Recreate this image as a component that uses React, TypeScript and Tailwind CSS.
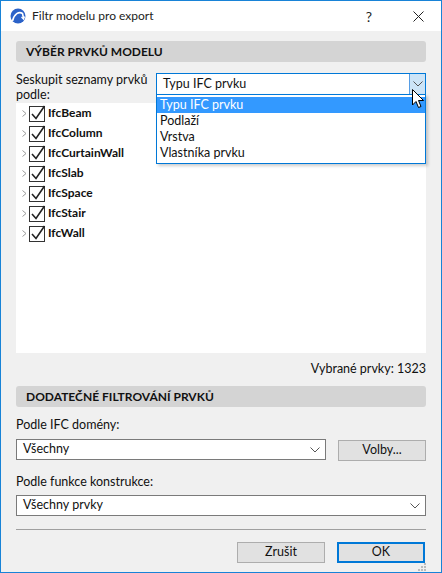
import React from 'react';

const items = ['IfcBeam', 'IfcColumn', 'IfcCurtainWall', 'IfcSlab', 'IfcSpace', 'IfcStair', 'IfcWall'];
const options = ['Typu IFC prvku', 'Podlaží', 'Vrstva', 'Vlastníka prvku'];

const Chevron = ({ color = '#404040' }: { color?: string }) => (
  <svg width="10" height="6" viewBox="0 0 10 6" fill="none">
    <path d="M0.5 0.5 L5 5 L9.5 0.5" stroke={color} strokeWidth="1" />
  </svg>
);

const CheckBox = () => (
  <svg width="17" height="17" viewBox="0 0 17 17" fill="none" className="shrink-0">
    <rect x="0.5" y="1.5" width="15" height="15" fill="white" stroke="#333" />
    <path d="M3 9 L7 13.5 L15.5 1" stroke="#222" strokeWidth="1.6" fill="none" />
  </svg>
);

const SectionHeader = ({ title }: { title: string }) => (
  <div className="h-[21px] shrink-0 bg-[#d4d4d4] rounded-[3px] flex items-center px-[10px] text-[12px] font-bold text-[#111]">
    {title}
  </div>
);

const Select = ({ value, className }: { value: string; className: string }) => (
  <div className={`h-[21px] bg-white border border-[#7a7a7a] flex items-center justify-between pl-[6px] pr-[5px] ${className}`}>
    <span>{value}</span>
    <Chevron color="#555" />
  </div>
);

const Button = ({ label, primary }: { label: string; primary?: boolean }) => (
  <div
    className={`w-[88px] h-[21px] bg-[#e1e1e1] flex items-center justify-center ${
      primary ? 'border-2 border-[#0078d7]' : 'border border-[#adadad]'
    }`}
  >
    {label}
  </div>
);

export default function App() {
  return (
    <div
      className="w-[442px] h-[573px] border border-[#1883d7] flex flex-col text-[12.5px] text-[#111] bg-[#f0f0f0]"
      style={{ fontFamily: 'Lato, "Noto Sans", sans-serif' }}
    >
      {/* title bar */}
      <div className="h-[30px] bg-white flex items-center shrink-0">
        <svg width="16" height="16" viewBox="0 0 16 16" className="ml-[9px]">
          <circle cx="8" cy="8" r="7.5" fill="#2b62c8" />
          <path d="M2.5 13 C4 6, 9 3, 12.5 5.5 L13.5 10" stroke="white" strokeWidth="1.6" fill="none" />
          <path d="M11.5 9 L13.5 11 L14.5 8.5" stroke="white" strokeWidth="1.3" fill="none" />
        </svg>
        <span className="ml-[6px] text-[12px] text-[#222]">Filtr modelu pro export</span>
        <span className="ml-auto mr-[41px] text-[14px] text-[#222]">?</span>
        <svg width="11" height="11" viewBox="0 0 11 11" className="mr-[17px]">
          <path d="M0.5 0.5 L10.5 10.5 M10.5 0.5 L0.5 10.5" stroke="#222" strokeWidth="1" />
        </svg>
      </div>

      {/* body */}
      <div className="flex-1 flex flex-col px-[15px] pt-[10px]">
        <SectionHeader title="VÝBĚR PRVKŮ MODELU" />

        <div className="relative flex h-[41px] pt-[8px]">
          <div className="w-[136px] leading-[15px] pt-[2px]">Seskupit seznamy prvků podle:</div>
          <div className="ml-[4px] mt-[3px] flex-1 h-[22px] bg-white border border-[#0078d7] flex items-center pl-[6px]">
            <span className="flex-1">Typu IFC prvku</span>
            <div className="w-[16px] h-full bg-[#cce4f7] border-l border-[#569de5] flex items-center justify-center">
              <Chevron color="#555" />
            </div>
          </div>

          {/* open dropdown list */}
          <div className="absolute left-[140px] right-0 top-[32px] bg-white border border-[#0078d7] z-10 shadow-[2px_2px_3px_rgba(0,0,0,0.2)] py-[2px] leading-[16px]">
            {options.map((o, i) => (
              <div key={o} className={`px-[3px] ${i === 0 ? 'bg-[#3399ff] text-white' : ''}`}>
                {o}
              </div>
            ))}
          </div>

          {/* mouse cursor */}
          <svg width="13" height="20" viewBox="0 0 13 20" className="absolute left-[396px] top-[27px] z-20">
            <path d="M0.5 0.5 L0.5 16 L4 12.5 L6.5 18.5 L9 17.5 L6.5 11.5 L11.5 11.5 Z" fill="white" stroke="black" strokeWidth="1" />
          </svg>
        </div>

        {/* tree */}
        <div className="h-[250px] shrink-0 bg-white">
          {items.map((it) => (
            <div key={it} className="h-[20px] flex items-center pl-[6px]">
              <svg width="5" height="7" viewBox="0 0 5 7" className="mr-[2px]">
                <path d="M0.5 0.5 L4 3.5 L0.5 6.5" stroke="#999" fill="none" />
              </svg>
              <CheckBox />
              <span className="ml-[2px] font-bold text-[12px] text-[#111]">{it}</span>
            </div>
          ))}
        </div>

        <div className="h-[33px] shrink-0 flex items-center justify-end">Vybrané prvky: 1323</div>

        <SectionHeader title="DODATEČNÉ FILTROVÁNÍ PRVKŮ" />

        <div className="h-[32px] shrink-0 flex items-end pb-[6px] leading-[16px]">Podle IFC domény:</div>
        <div className="flex">
          <Select value="Všechny" className="w-[310px]" />
          <div className="ml-auto mt-[1px]">
            <Button label="Volby..." />
          </div>
        </div>

        <div className="h-[34px] shrink-0 flex items-end pb-[5px] leading-[16px]">Podle funkce konstrukce:</div>
        <Select value="Všechny prvky" className="w-full" />

        <div className="mt-[13px] h-px bg-[#a0a0a0]" />

        <div className="mt-[12px] flex justify-end gap-[12px] pr-px">
          <Button label="Zrušit" />
          <Button label="OK" primary />
        </div>

        <div className="flex-1 flex justify-end items-end pb-[2px]">
          <svg width="8" height="8" viewBox="0 0 8 8">
            <rect x="6" y="0" width="2" height="2" fill="#bbb" />
            <rect x="3" y="3" width="2" height="2" fill="#bbb" />
            <rect x="6" y="3" width="2" height="2" fill="#bbb" />
            <rect x="0" y="6" width="2" height="2" fill="#bbb" />
            <rect x="3" y="6" width="2" height="2" fill="#bbb" />
            <rect x="6" y="6" width="2" height="2" fill="#bbb" />
          </svg>
        </div>
      </div>
    </div>
  );
}
